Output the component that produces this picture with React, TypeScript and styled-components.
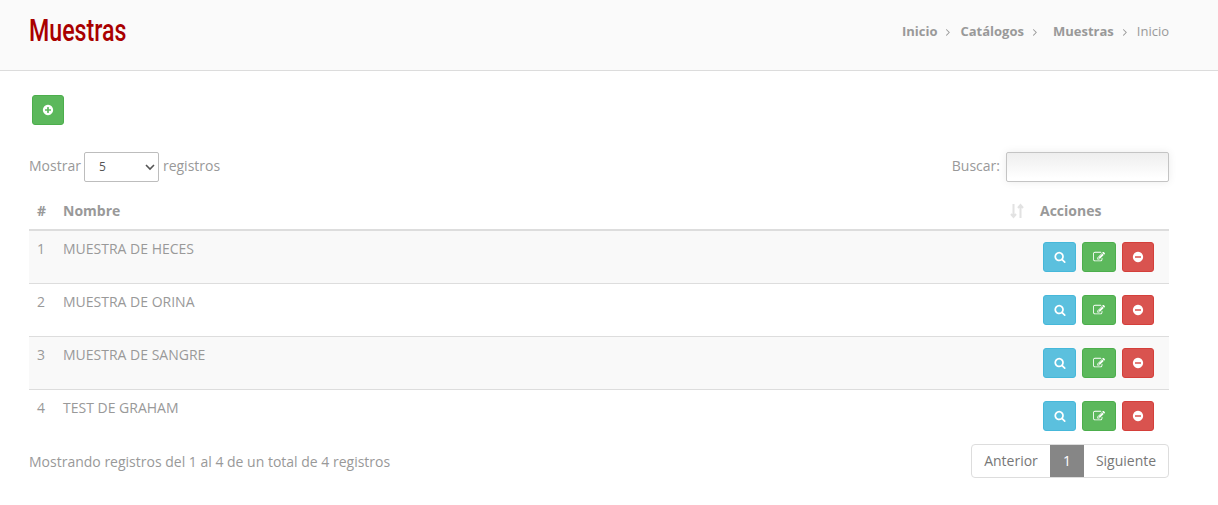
import React from 'react';
import styled, { createGlobalStyle } from 'styled-components';

const GlobalStyle = createGlobalStyle`
  * {
    box-sizing: border-box;
  }
  body {
    margin: 0;
    background: #fff;
    color: #999;
    font: 14px/20px 'Open Sans', sans-serif;
  }
`;

const Header = styled.header`
  display: flex;
  justify-content: space-between;
  height: 71px;
  padding: 0 49px 0 29px;
  background: #fafafa;
  border-bottom: 1px solid #dcdcdc;
`;

const Title = styled.h1`
  width: 96px;
  margin: 10px 0 0;
  color: #a90000;
  font: 500 32px/40px Roboto, sans-serif;
  white-space: nowrap;
  transform: scaleX(0.725);
  transform-origin: 0 0;
`;

const Breadcrumb = styled.nav`
  display: flex;
  align-items: center;
  height: 20px;
  margin-top: 21px;
  font-size: 13px;

  svg {
    margin: 1px 6px 0 5px;
  }
`;

const Crumb = styled.a<{ $indent?: boolean }>`
  margin-left: ${({ $indent }) => ($indent ? '6px' : '0')};
  font-weight: 700;
`;

const Content = styled.main`
  padding: 24px 49px 0 29px;
`;

const colors = {
  info: ['#5bc0de', '#46b8da'],
  success: ['#5cb85c', '#4cae4c'],
  danger: ['#d9534f', '#d43f3a'],
};

const Button = styled.button<{ $kind: keyof typeof colors; $width: number }>`
  display: flex;
  align-items: center;
  justify-content: center;
  width: ${({ $width }) => $width}px;
  height: 30px;
  padding: 0;
  color: #fff;
  background: ${({ $kind }) => colors[$kind][0]};
  border: 1px solid ${({ $kind }) => colors[$kind][1]};
  border-radius: 3px;
`;

const Toolbar = styled.div`
  padding-left: 3px;
`;

const Controls = styled.div`
  display: flex;
  justify-content: space-between;
  margin-top: 27px;
`;

const Label = styled.label`
  display: flex;
  align-items: center;
  height: 30px;

  span {
    position: relative;
    top: -1px;
  }
`;

const Select = styled.div`
  display: flex;
  align-items: center;
  justify-content: space-between;
  width: 75px;
  height: 30px;
  margin: 0 4px 0 3px;
  padding: 0 3px 0 14px;
  color: #555;
  font-size: 12px;
  border: 1px solid #bdbdbd;
  border-radius: 2px;
`;

const Search = styled.input`
  width: 163px;
  height: 30px;
  margin-left: 6px;
  background: linear-gradient(#eee, #fff 90%);
  border: 1px solid #c4c4c4;
  border-radius: 2px;
  box-shadow: 0 0 8px rgba(0, 0, 0, 0.08);
  outline: none;
`;

const Table = styled.table`
  width: 100%;
  margin-top: 11px;
  table-layout: fixed;
  border-spacing: 0;

  th {
    height: 38px;
    padding: 0 8px;
    text-align: left;
    border-bottom: 2px solid #ddd;
  }
  td {
    height: 53px;
    padding: 8px;
    vertical-align: top;
    border-top: 1px solid #ddd;
  }
  tbody tr:first-child td {
    height: 52px;
    border-top: 0;
  }
  tbody tr:nth-child(odd) {
    background: #f9f9f9;
  }
`;

const SortHead = styled.div`
  display: flex;
  align-items: center;
  justify-content: space-between;
`;

const Actions = styled.div`
  display: flex;
  gap: 6px;
  padding: 3px 0 0 3px;
`;

const Footer = styled.div`
  display: flex;
  justify-content: space-between;
  margin-top: 2px;
`;

const Info = styled.div`
  padding-top: 8px;
`;

const Pagination = styled.div`
  display: flex;
  height: 34px;
  overflow: hidden;
  border: 1px solid #ddd;
  border-radius: 4px;
`;

const Page = styled.a<{ $active?: boolean; $width: number }>`
  width: ${({ $width }) => $width}px;
  margin: -1px 0;
  color: ${({ $active }) => ($active ? '#fff' : '#777')};
  line-height: 34px;
  text-align: center;
  background: ${({ $active }) => ($active ? '#868686' : 'transparent')};
`;

const CIRCLE =
  'm320-64q0 209-103 385.5t-279.5 279.5-385.5 103-385.5-103-279.5-279.5-103-385.5 103-385.5 279.5-279.5 385.5-103 385.5 103 279.5 279.5 103 385.5z';

const icons = {
  plus:
    'M1344 960v-128q0-26-19-45t-45-19h-256v-256q0-26-19-45t-45-19h-128q-26 0-45 19t-19 45v256h-256q-26 0-45 19t-19 45v128q0 26 19 45t45 19h256v256q0 26 19 45t45 19h128q26 0 45-19t19-45v-256h256q26 0 45-19t19-45z' +
    CIRCLE,
  minus:
    'M1344 960v-128q0-26-19-45t-45-19h-768q-26 0-45 19t-19 45v128q0 26 19 45t45 19h768q26 0 45-19t19-45z' +
    CIRCLE,
  search:
    'M1216 832q0-185-131.5-316.5t-316.5-131.5-316.5 131.5-131.5 316.5 131.5 316.5 316.5 131.5 316.5-131.5 131.5-316.5zm512 832q0 52-38 90t-90 38q-54 0-90-38l-343-342q-179 124-399 124-143 0-273.5-55.5t-225-150-150-225-55.5-273.5 55.5-273.5 150-225 225-150 273.5-55.5 273.5 55.5 225 150 150 225 55.5 273.5q0 220-124 399l343 343q37 37 37 90z',
  edit:
    'M888 1184l116-116-152-152-116 116v56h96v96h56zm440-720q-16-16-33 1l-350 350q-17 17-1 33t33-1l350-350q17-17 1-33zm80 594v190q0 119-84.5 203.5t-203.5 84.5h-832q-119 0-203.5-84.5t-84.5-203.5v-832q0-119 84.5-203.5t203.5-84.5h832q63 0 117 25 15 7 18 23 3 17-9 29l-49 49q-14 14-32 8-23-6-45-6h-832q-66 0-113 47t-47 113v832q0 66 47 113t113 47h832q66 0 113-47t47-113v-126q0-13 9-22l64-64q15-15 35-7t20 29zm-96-738l288 288-672 672h-288v-288zm444 132l-92 92-288-288 92-92q28-28 68-28t68 28l152 152q28 28 28 68t-28 68z',
  angle:
    'M1171 960q0 13-10 23l-466 466q-10 10-23 10t-23-10l-50-50q-10-10-10-23t10-23l393-393-393-393q-10-10-10-23t10-23l50-50q10-10 23-10t23 10l466 466q10 10 10 23z',
};

const Icon = ({ name, size = 12 }: { name: keyof typeof icons; size?: number }) => (
  <svg width={size} height={size} viewBox="0 0 1792 1792" fill="currentColor">
    <path d={icons[name]} />
  </svg>
);

const SortIcon = () => (
  <svg width="14" height="16" viewBox="0 0 14 16" fill="none" stroke="#e2e2e2" strokeWidth="2">
    <path d="M3.5 1v13M1 11l2.5 3L6 11M10.5 15V2M8 5l2.5-3L13 5" />
  </svg>
);

const samples = ['MUESTRA DE HECES', 'MUESTRA DE ORINA', 'MUESTRA DE SANGRE', 'TEST DE GRAHAM'];

const App = () => (
  <>
    <GlobalStyle />
    <Header>
      <Title>Muestras</Title>
      <Breadcrumb>
        <Crumb>Inicio</Crumb>
        <Icon name="angle" />
        <Crumb>Catálogos</Crumb>
        <Icon name="angle" />
        <Crumb $indent>Muestras</Crumb>
        <Icon name="angle" />
        <span>Inicio</span>
      </Breadcrumb>
    </Header>
    <Content>
      <Toolbar>
        <Button $kind="success" $width={32} aria-label="Agregar">
          <Icon name="plus" />
        </Button>
      </Toolbar>
      <Controls>
        <Label>
          <span>Mostrar</span>
          <Select>
            5
            <svg width="10" height="7" viewBox="0 0 10 7" fill="none" stroke="#555" strokeWidth="1.6">
              <path d="M1 1l4 4 4-4" />
            </svg>
          </Select>
          <span>registros</span>
        </Label>
        <Label>
          <span>Buscar:</span>
          <Search />
        </Label>
      </Controls>
      <Table>
        <colgroup>
          <col width="26" />
          <col />
          <col width="137" />
        </colgroup>
        <thead>
          <tr>
            <th>#</th>
            <th>
              <SortHead>
                Nombre
                <SortIcon />
              </SortHead>
            </th>
            <th>Acciones</th>
          </tr>
        </thead>
        <tbody>
          {samples.map((name, i) => (
            <tr key={name}>
              <td>{i + 1}</td>
              <td>{name}</td>
              <td>
                <Actions>
                  <Button $kind="info" $width={33} aria-label="Ver">
                    <Icon name="search" />
                  </Button>
                  <Button $kind="success" $width={34} aria-label="Editar">
                    <Icon name="edit" />
                  </Button>
                  <Button $kind="danger" $width={32} aria-label="Eliminar">
                    <Icon name="minus" />
                  </Button>
                </Actions>
              </td>
            </tr>
          ))}
        </tbody>
      </Table>
      <Footer>
        <Info>Mostrando registros del 1 al 4 de un total de 4 registros</Info>
        <Pagination>
          <Page $width={78}>Anterior</Page>
          <Page $width={34} $active>
            1
          </Page>
          <Page $width={84}>Siguiente</Page>
        </Pagination>
      </Footer>
    </Content>
  </>
);

export default App;
